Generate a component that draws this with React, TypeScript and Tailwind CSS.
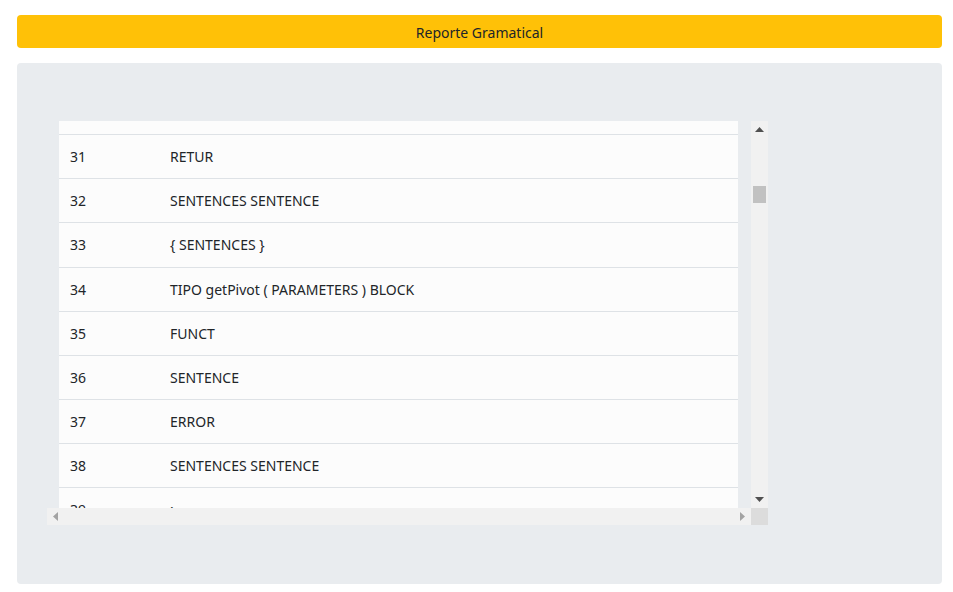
import React from "react";

const rows: [string, string][] = [
  ["30", ""],
  ["31", "RETUR"],
  ["32", "SENTENCES SENTENCE"],
  ["33", "{ SENTENCES }"],
  ["34", "TIPO getPivot ( PARAMETERS ) BLOCK"],
  ["35", "FUNCT"],
  ["36", "SENTENCE"],
  ["37", "ERROR"],
  ["38", "SENTENCES SENTENCE"],
  ["39", ";"],
];

export default function App() {
  return (
    <div
      className="w-[953px] h-[592px] bg-white pt-[15px] pl-[17px] pr-[11px] text-[#212529]"
      style={{ fontFamily: '"Noto Sans", "Open Sans", sans-serif' }}
    >
      <div className="h-[33px] rounded-[4px] bg-[#ffc107] flex items-center justify-center text-[14px] pt-[1px]">
        Reporte Gramatical
      </div>
      <div className="mt-[15px] h-[521px] rounded-[4px] bg-[#e9ecef] pt-[58px] pl-[30px]">
        <div className="w-[721px] h-[404px] flex flex-col">
          <div className="flex h-[387px]">
            <div className="w-[704px] h-[387px] overflow-hidden pl-[12px] pr-[13px]">
              <div className="-mt-[30px] bg-[#fcfcfc]">
                {rows.map(([n, t]) => (
                  <div
                    key={n}
                    className="h-[44.125px] border-b border-[#dee2e6] flex items-center text-[14px]"
                  >
                    <div className="w-[111px] pl-[11px]">{n}</div>
                    <div>{t}</div>
                  </div>
                ))}
              </div>
            </div>
            <div className="w-[17px] h-[387px] bg-[#f1f1f1] flex flex-col items-center">
              <div className="h-[17px] flex items-center justify-center">
                <svg width="9" height="5" viewBox="0 0 9 5">
                  <polygon points="0,5 9,5 4.5,0" fill="#505050" />
                </svg>
              </div>
              <div className="mt-[48px] w-[13px] h-[17px] bg-[#c1c1c1]" />
              <div className="flex-1" />
              <div className="h-[17px] flex items-center justify-center">
                <svg width="9" height="5" viewBox="0 0 9 5">
                  <polygon points="0,0 9,0 4.5,5" fill="#505050" />
                </svg>
              </div>
            </div>
          </div>
          <div className="flex h-[17px]">
            <div className="w-[704px] h-[17px] bg-[#f1f1f1] flex items-center justify-between">
              <div className="w-[17px] flex items-center justify-center">
                <svg width="5" height="9" viewBox="0 0 5 9">
                  <polygon points="5,0 5,9 0,4.5" fill="#a3a3a3" />
                </svg>
              </div>
              <div className="w-[17px] flex items-center justify-center">
                <svg width="5" height="9" viewBox="0 0 5 9">
                  <polygon points="0,0 0,9 5,4.5" fill="#a3a3a3" />
                </svg>
              </div>
            </div>
            <div className="w-[17px] h-[17px] bg-[#dcdcdc]" />
          </div>
        </div>
      </div>
    </div>
  );
}
